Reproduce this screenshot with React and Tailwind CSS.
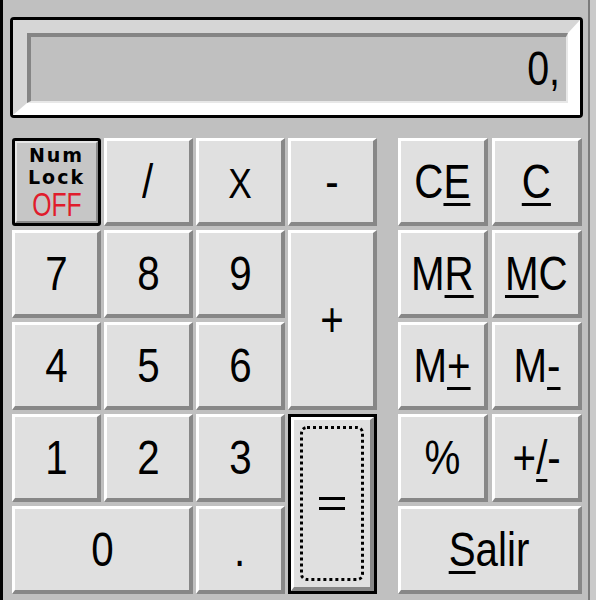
import React from 'react';

const face = 'bg-[#e0e0e0] border-t-[3px] border-l-[3px] border-b-[4px] border-r-[4px] border-t-white border-l-white border-b-[#878787] border-r-[#878787]';

function Key({ children, className = '' }) {
  return (
    <div className={`flex items-center justify-center ${face} text-[48px] leading-none text-black ${className}`}>
      <span className="inline-block scale-x-[0.84]">{children}</span>
    </div>
  );
}

function U({ children }) {
  return <span className="underline decoration-[3px] underline-offset-[5px]">{children}</span>;
}

export default function App() {
  return (
    <div className="w-[596px] h-[600px] bg-[#cacaca] flex font-['Liberation_Sans',Arial,sans-serif]">
      <div className="w-[590px] h-[600px] bg-[#c0c0c0] border-l-[3px] border-black border-r-2 border-r-[#7c7c7c] flex flex-col">
        {/* display */}
        <div className="mt-[17px] ml-[7px] w-[573px] h-[101px] border-[3px] border-black rounded-[4px] flex">
          <div className="flex-1 flex border-t-[13px] border-l-[14px] border-b-[12px] border-r-[12px] border-t-[#d6d6d6] border-l-[#d6d6d6] border-b-white border-r-white">
            <div className="flex-1 flex items-center justify-end pr-[6px] bg-[#c0c0c0] border-t-[4px] border-l-[4px] border-t-[#858585] border-l-[#858585] border-b-2 border-r-2 border-b-[#e8e8e8] border-r-[#e8e8e8] text-[48px] leading-none text-black">
              <span className="inline-block scale-x-[0.82] origin-right">0,</span>
            </div>
          </div>
        </div>

        {/* keypad */}
        <div className="mt-[20px] ml-[9px] flex gap-[21px]">
          <div className="grid grid-cols-[repeat(4,89px)] grid-rows-[repeat(5,88px)] gap-x-[3px] gap-y-[4px]">
            <div className="border-[3px] border-black rounded-[3px] flex">
              <div className="flex-1 flex flex-col items-center justify-center bg-[#c6c6c6] border-t-2 border-l-2 border-t-[#e6e6e6] border-l-[#e6e6e6] border-b-2 border-r-2 border-b-[#8a8a8a] border-r-[#8a8a8a]">
                <span className="text-[19px] font-['DejaVu_Sans',sans-serif] leading-[22px] tracking-[2px] font-bold">Num</span>
                <span className="text-[19px] font-['DejaVu_Sans',sans-serif] leading-[22px] tracking-[2px] font-bold">Lock</span>
                <span className="text-[33px] leading-[33px] text-[#e01c2c] scale-x-[0.75]">OFF</span>
              </div>
            </div>
            <Key>/</Key>
            <Key><span className="text-[42px]">X</span></Key>
            <Key>-</Key>

            <Key>7</Key>
            <Key>8</Key>
            <Key>9</Key>
            <Key className="row-span-2">+</Key>

            <Key>4</Key>
            <Key>5</Key>
            <Key>6</Key>

            <Key>1</Key>
            <Key>2</Key>
            <Key>3</Key>
            <div className="row-span-2 border-[3px] border-black flex">
              <div className={`flex-1 flex p-[6px] ${face}`}>
                <div className="flex-1 flex items-center justify-center border-[3px] border-dotted border-black rounded-[7px]">
                  <div className="flex flex-col gap-[7px]">
                    <div className="w-[26px] h-[3px] bg-black" />
                    <div className="w-[26px] h-[3px] bg-black" />
                  </div>
                </div>
              </div>
            </div>

            <Key className="col-span-2">0</Key>
            <Key>.</Key>
          </div>

          <div className="grid grid-cols-[repeat(2,90px)] grid-rows-[repeat(5,88px)] gap-x-[4px] gap-y-[4px]">
            <Key>C<U>E</U></Key>
            <Key><U>C</U></Key>
            <Key>M<U>R</U></Key>
            <Key><U>M</U>C</Key>
            <Key>M<U>+</U></Key>
            <Key>M<U>-</U></Key>
            <Key>%</Key>
            <Key>+<U>/</U>-</Key>
            <Key className="col-span-2 text-[46px]"><U>S</U>alir</Key>
          </div>
        </div>
      </div>
    </div>
  );
}
